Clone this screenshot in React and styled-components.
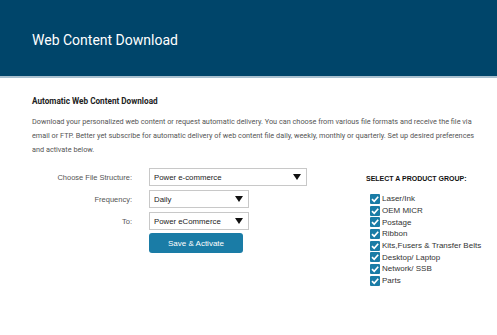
import React from 'react';
import styled, { createGlobalStyle } from 'styled-components';

const GlobalStyle = createGlobalStyle`
  html, body {
    margin: 0;
    padding: 0;
    background: #ffffff;
  }
  body {
    font-family: 'Liberation Sans', Arial, sans-serif;
    color: #333;
  }
`;

const groups = [
  'Laser/Ink',
  'OEM MICR',
  'Postage',
  'Ribbon',
  'Kits,Fusers & Transfer Belts',
  'Desktop/ Laptop',
  'Network/ SSB',
  'Parts',
];

const Caret = () => (
  <svg width="8" height="6" viewBox="0 0 8 6">
    <path d="M0 0 H8 L4 6 Z" fill="#111" />
  </svg>
);

const Check = () => (
  <svg width="10" height="10" viewBox="0 0 10 10">
    <rect width="10" height="10" rx="1" fill="#1a7ca6" />
    <path d="M2 5.2 L4.2 7.3 L8.2 2.8" stroke="#fff" strokeWidth="1.7" fill="none" />
  </svg>
);

const App = () => {
  return (
    <>
      <GlobalStyle />
      <Header>
        <Title>Web Content Download</Title>
      </Header>
      <Main>
        <SubTitle>Automatic Web Content Download</SubTitle>
        <Intro>
          <Line>Download your personalized web content or request automatic delivery. You can choose from various file formats and receive the file via</Line>
          <Line>email or FTP. Better yet subscribe for automatic delivery of web content file daily, weekly, monthly or quarterly. Set up desired preferences</Line>
          <Line>and activate below.</Line>
        </Intro>
        <Columns>
          <Form>
            <Label>Choose File Structure:</Label>
            <Select $width={158}>
              <span>Power e-commerce</span>
              <Caret />
            </Select>
            <Label>Frequency:</Label>
            <Select $width={100}>
              <span>Daily</span>
              <Caret />
            </Select>
            <Label>To:</Label>
            <Select $width={100}>
              <span>Power eCommerce</span>
              <Caret />
            </Select>
            <span />
            <Button>Save &amp; Activate</Button>
          </Form>
          <Groups>
            <GroupTitle>SELECT A PRODUCT GROUP:</GroupTitle>
            <GroupList>
              {groups.map((g) => (
                <GroupItem key={g}>
                  <Check />
                  <span>{g}</span>
                </GroupItem>
              ))}
            </GroupList>
          </Groups>
        </Columns>
      </Main>
    </>
  );
};

export default App;

const Header = styled.div`
  height: 78px;
  background: #00456a;
  border-bottom: 2px solid #a9c0cf;
  display: flex;
  align-items: center;
  padding: 4px 0 0 32px;
  box-sizing: border-box;
`;

const Title = styled.h1`
  margin: 0;
  font-family: Roboto, 'Liberation Sans', sans-serif;
  font-weight: 400;
  font-size: 14px;
  color: #ffffff;
`;

const Main = styled.div`
  padding: 18px 0 0 32px;
`;

const SubTitle = styled.h2`
  margin: 0;
  font-family: Roboto, 'Liberation Sans', sans-serif;
  font-size: 8.2px;
  font-weight: 700;
  color: #222;
`;

const Intro = styled.div`
  margin: 9px 0 0;
  font-family: Roboto, 'Liberation Sans', sans-serif;
  font-size: 7.3px;
  line-height: 14px;
  color: #555;
`;

const Line = styled.div`
  white-space: nowrap;
`;

const Columns = styled.div`
  display: flex;
  align-items: flex-start;
  margin-top: 11px;
`;

const Form = styled.div`
  width: 334px;
  flex-shrink: 0;
  display: grid;
  grid-template-columns: 100px auto;
  column-gap: 17px;
  row-gap: 4px;
  align-items: center;
  align-content: start;
  justify-items: start;
`;

const Label = styled.div`
  justify-self: end;
  font-size: 7.5px;
  color: #555;
`;

const Select = styled.div`
  width: ${(p) => p.$width}px;
  height: 18px;
  box-sizing: border-box;
  border: 1px solid #c8c8c8;
  background: #fff;
  display: flex;
  align-items: center;
  justify-content: space-between;
  padding: 0 5px 0 4px;
  font-size: 7.8px;
  color: #222;
`;

const Button = styled.button`
  width: 94px;
  height: 20px;
  margin-top: -1px;
  border: none;
  border-radius: 3px;
  background: #1a7ca6;
  color: #fff;
  font-family: 'Liberation Sans', Arial, sans-serif;
  font-size: 8px;
  padding: 0;
`;

const Groups = styled.div`
  display: flex;
  flex-direction: column;
  padding-top: 7px;
`;

const GroupTitle = styled.div`
  font-size: 7px;
  font-weight: 700;
  color: #111;
  white-space: nowrap;
`;

const GroupList = styled.div`
  display: flex;
  flex-direction: column;
  margin-top: 11px;
  padding-left: 4px;
`;

const GroupItem = styled.div`
  display: flex;
  align-items: center;
  gap: 2px;
  height: 11.7px;
  font-size: 8px;
  color: #333;
  white-space: nowrap;
`;
